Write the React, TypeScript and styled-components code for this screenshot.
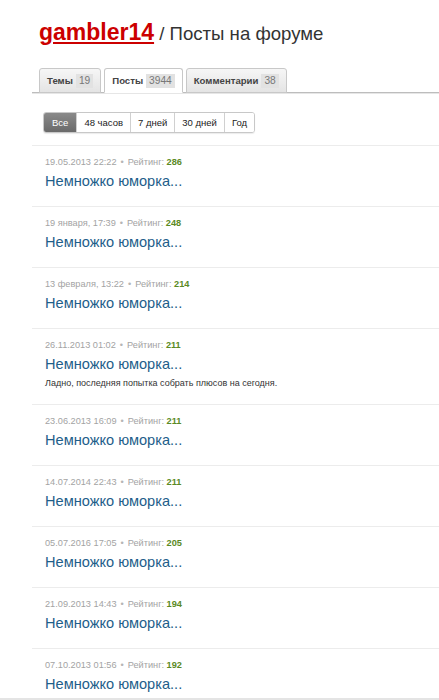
import React from 'react'
import styled, { createGlobalStyle } from 'styled-components'

const GlobalStyle = createGlobalStyle`
  html, body {
    margin     : 0;
    padding    : 0;
    background : #fff;
    font-family: Arial, "Liberation Sans", sans-serif;
  }
`

const Page = styled.div`
  padding-left : 32px;
`

const Header = styled.h1`
  margin      : 0;
  padding     : 18px 0 0 7px;
  font-size   : 18.6px;
  line-height : 28px;
  font-weight : normal;
  color       : #333;
`

const UserLink = styled.a`
  font-size       : 23px;
  color           : #cc0000;
  font-weight     : bold;
  text-decoration : underline;
`

const TabBar = styled.div`
  display       : flex;
  align-items   : flex-end;
  gap           : 3px;
  margin-top    : 20px;
  padding-left  : 7px;
  height        : 24px;
  border-bottom : 1px solid #bdbdbd;
  box-shadow    : 0 1px 0 #e6e6e6;
`

const Tab = styled.div<{ $active?: boolean }>`
  display       : flex;
  align-items   : center;
  gap           : 3px;
  height        : 23px;
  padding       : 0 7px 0 7px;
  margin-bottom : -1px;
  border        : 1px solid #c8c8c8;
  border-bottom : 1px solid ${ (p) => (p.$active ? '#fff' : '#c8c8c8') };
  border-radius : 3px 3px 0 0;
  background    : ${ (p) => (p.$active ? '#fff' : 'linear-gradient(#f6f6f6, #e4e4e4)') };
  font-size     : 9.6px;
  font-weight   : bold;
  color         : #444;
`

const Count = styled.span`
  padding     : 2px 3px;
  background  : #e2e2e2;
  color       : #777;
  font-weight : normal;
  font-size   : 10.2px;
  line-height : 10px;
`

const Filters = styled.div`
  display       : inline-flex;
  margin        : 19px 0 12px 11px;
  border        : 1px solid #c8c8c8;
  border-radius : 3px;
  overflow      : hidden;
  box-shadow    : 0 1px 1px rgba(0, 0, 0, 0.08);
`

const FilterButton = styled.div<{ $active?: boolean }>`
  height       : 19px;
  line-height  : 19px;
  padding      : 0 ${ (p) => (p.$active ? '8px' : '7px') };
  font-size    : 9.5px;
  color        : ${ (p) => (p.$active ? '#fff' : '#222') };
  background   : ${ (p) => (p.$active ? 'linear-gradient(#8a8a8a, #6a6a6a)' : '#fff') };
  border-left  : 1px solid #d0d0d0;

  &:first-child {
    border-left : none;
  }
`

const List = styled.div``

const Item = styled.div`
  border-top : 1px solid #ececec;
  padding    : 9px 13px 15px;

  &:last-child {
    padding-bottom : 4px;
  }
`

const Meta = styled.div`
  font-size   : 9.2px;
  line-height : 14px;
  color       : #a3a3a3;
`

const Dot = styled.span`
  margin : 0 4px;
  color  : #b5b5b5;
`

const Rating = styled.b`
  color : #5b8a24;
`

const Title = styled.a`
  display         : block;
  margin-top      : 2px;
  font-size       : 14.6px;
  line-height     : 20px;
  color           : #1e5e8a;
  text-decoration : none;
`

const Description = styled.div`
  margin-top  : 3px;
  font-size   : 9px;
  line-height : 12px;
  color       : #333;
`

const Footer = styled.div`
  height     : 3px;
  background : #e4e4e4;
`

type Post = { date: string, rating: number, text?: string }

const posts: Post[] = [
  { date: '19.05.2013 22:22', rating: 286 },
  { date: '19 января, 17:39', rating: 248 },
  { date: '13 февраля, 13:22', rating: 214 },
  { date: '26.11.2013 01:02', rating: 211, text: 'Ладно, последняя попытка собрать плюсов на сегодня.' },
  { date: '23.06.2013 16:09', rating: 211 },
  { date: '14.07.2014 22:43', rating: 211 },
  { date: '05.07.2016 17:05', rating: 205 },
  { date: '21.09.2013 14:43', rating: 194 },
  { date: '07.10.2013 01:56', rating: 192 },
]

const filters = [ 'Все', '48 часов', '7 дней', '30 дней', 'Год' ]

export default function App() {
  return (
    <>
      <GlobalStyle />
      <Page>
        <Header>
          <UserLink>gambler14</UserLink> / Посты на форуме
        </Header>
        <TabBar>
          <Tab>Темы <Count>19</Count></Tab>
          <Tab $active>Посты <Count>3944</Count></Tab>
          <Tab>Комментарии <Count>38</Count></Tab>
        </TabBar>
        <Filters>
          { filters.map((f, i) => <FilterButton key={ f } $active={ i === 0 }>{ f }</FilterButton>) }
        </Filters>
        <List>
          { posts.map((p, i) => (
            <Item key={ i }>
              <Meta>
                { p.date }<Dot>•</Dot>Рейтинг: <Rating>{ p.rating }</Rating>
              </Meta>
              <Title>Немножко юморка...</Title>
              { p.text && <Description>{ p.text }</Description> }
            </Item>
          )) }
        </List>
      </Page>
      <Footer />
    </>
  )
}
